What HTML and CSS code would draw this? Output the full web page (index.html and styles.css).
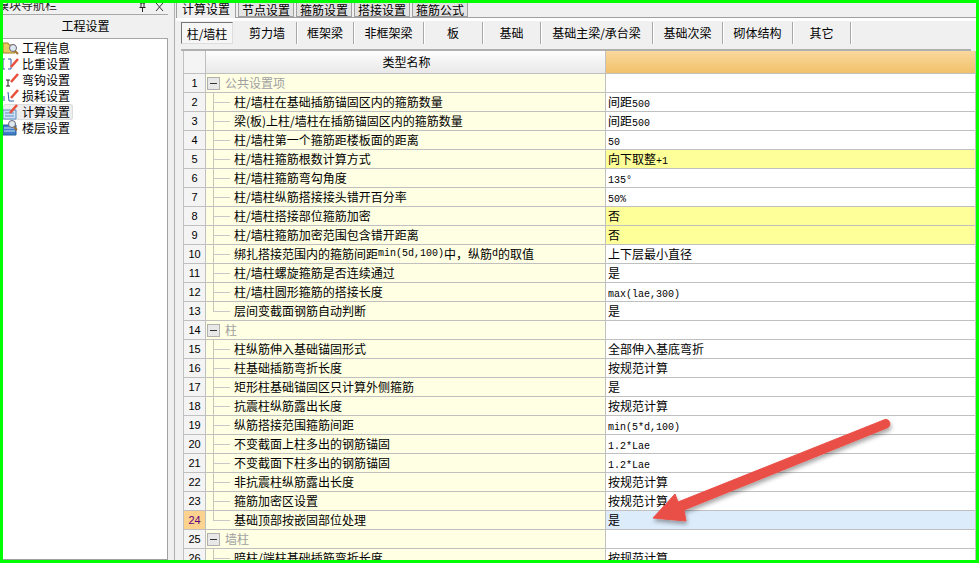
FILE: index.html
```html
<!DOCTYPE html>
<html lang="zh-CN">
<head>
    <meta charset="UTF-8">
    <title>工程设置</title>
    <link rel="stylesheet" href="styles.css">
</head>
<body>
    <div class="app">
        <!-- Left navigation panel -->
        <div class="sidebar">
            <div class="nav-title">
                <span class="nav-title-text">模块导航栏</span>
                <svg class="nav-pin" width="12" height="9" viewBox="0 0 12 9"><path d="M3 0h5M4 0v4M7 0v4M2.500 4.500h6M5.500 5v4" stroke="#222" fill="none"/></svg>
                <svg class="nav-close" width="10" height="9" viewBox="0 0 10 9"><path d="M1 0l7 8M8 0l-7 8" stroke="#333" fill="none"/></svg>
            </div>
            <div class="nav-head">工程设置</div>
            <ul class="nav-list">
                <li class="nav-item">
                    <svg class="nav-icon" width="16" height="16" viewBox="0 0 16 16"><path d="M0 3h5l1 2h6v8H0z" fill="#e8c860" stroke="#a08020"/><circle cx="10" cy="8" r="3.500" fill="#dfe9f2" stroke="#667"/><path d="M12 11l3 3" stroke="#a07030" stroke-width="2"/></svg>
                    工程信息
                </li>
                <li class="nav-item">
                    <svg class="nav-icon" width="16" height="16" viewBox="0 0 16 16"><path d="M2 3H0v10h2M5 3h3v10H5" stroke="#2f5fa0" fill="none"/><path d="M8 11l7-8" stroke="#e8503c" stroke-width="2.500"/></svg>
                    比重设置
                </li>
                <li class="nav-item">
                    <svg class="nav-icon" width="16" height="16" viewBox="0 0 16 16"><path d="M3 8h4M5 8v6M3 14h4" stroke="#222" fill="none"/><path d="M8 10l7-8" stroke="#e8503c" stroke-width="2.500"/></svg>
                    弯钩设置
                </li>
                <li class="nav-item">
                    <svg class="nav-icon" width="16" height="16" viewBox="0 0 16 16"><path d="M1 8v5M5 4l1 9h5" stroke="#2f5fa0" fill="none"/><path d="M8 10l7-8" stroke="#e8503c" stroke-width="2.500"/></svg>
                    损耗设置
                </li>
                <li class="nav-item nav-item-on">
                    <svg class="nav-icon" width="16" height="16" viewBox="0 0 16 16"><path d="M0 6h13v9H0z" fill="#cfe2f5" stroke="#5b8cc0"/><path d="M2 9h9M2 12h9" stroke="#5b8cc0"/><path d="M7 9l7-8" stroke="#e8503c" stroke-width="2.500"/></svg>
                    计算设置
                </li>
                <li class="nav-item">
                    <svg class="nav-icon" width="16" height="16" viewBox="0 0 16 16"><path d="M0 5h13v10H0z" fill="#3f7fc8" stroke="#2a5c98"/><path d="M1 8h11M1 11h11" stroke="#cfe2f5"/><circle cx="9" cy="4" r="3.500" fill="#dfe9f2" stroke="#667"/><path d="M11 7l3 3" stroke="#a07030" stroke-width="2"/></svg>
                    楼层设置
                </li>
            </ul>
        </div>

        <!-- Settings panel -->
        <div class="main">
            <div class="tabs">
                <div class="tab tab-on">计算设置</div>
                <div class="tab">节点设置</div>
                <div class="tab">箍筋设置</div>
                <div class="tab">搭接设置</div>
                <div class="tab">箍筋公式</div>
            </div>
            <div class="subtabs">
                <div class="subtab sub-52 subtab-on">柱/墙柱</div>
                <div class="subtab sub-59">剪力墙</div>
                <div class="subtab sub-57">框架梁</div>
                <div class="subtab sub-70">非框架梁</div>
                <div class="subtab sub-59">板</div>
                <div class="subtab sub-58">基础</div>
                <div class="subtab sub-112">基础主梁/承台梁</div>
                <div class="subtab sub-70">基础次梁</div>
                <div class="subtab sub-70">砌体结构</div>
                <div class="subtab sub-58">其它</div>
            </div>

            <table class="grid">
                <colgroup>
                    <col class="col-no">
                    <col class="col-name">
                    <col>
                </colgroup>
                <thead>
                    <tr>
                        <th class="no"></th>
                        <th>类型名称</th>
                        <th class="head-value"></th>
                    </tr>
                </thead>
                <tbody>
                    <tr><td class="no">1</td><td class="name"><div class="cell"><span class="fold"></span><span class="group">公共设置项</span></div></td><td></td></tr>
                    <tr><td class="no">2</td><td class="name"><div class="cell"><span class="branch"></span>柱/墙柱在基础插筋锚固区内的箍筋数量</div></td><td>间距<span class="lat">500</span></td></tr>
                    <tr><td class="no">3</td><td class="name"><div class="cell"><span class="branch"></span>梁(板)上柱/墙柱在插筋锚固区内的箍筋数量</div></td><td>间距<span class="lat">500</span></td></tr>
                    <tr><td class="no">4</td><td class="name"><div class="cell"><span class="branch"></span>柱/墙柱第一个箍筋距楼板面的距离</div></td><td><span class="lat">50</span></td></tr>
                    <tr><td class="no">5</td><td class="name"><div class="cell"><span class="branch"></span>柱/墙柱箍筋根数计算方式</div></td><td class="changed">向下取整<span class="lat">+1</span></td></tr>
                    <tr><td class="no">6</td><td class="name"><div class="cell"><span class="branch"></span>柱/墙柱箍筋弯勾角度</div></td><td><span class="lat">135°</span></td></tr>
                    <tr><td class="no">7</td><td class="name"><div class="cell"><span class="branch"></span>柱/墙柱纵筋搭接接头错开百分率</div></td><td><span class="lat">50%</span></td></tr>
                    <tr><td class="no">8</td><td class="name"><div class="cell"><span class="branch"></span>柱/墙柱搭接部位箍筋加密</div></td><td class="changed">否</td></tr>
                    <tr><td class="no">9</td><td class="name"><div class="cell"><span class="branch"></span>柱/墙柱箍筋加密范围包含错开距离</div></td><td class="changed">否</td></tr>
                    <tr><td class="no">10</td><td class="name"><div class="cell"><span class="branch"></span>绑扎搭接范围内的箍筋间距<span class="lat">min(5d,100)</span>中，纵筋<span class="lat">d</span>的取值</div></td><td>上下层最小直径</td></tr>
                    <tr><td class="no">11</td><td class="name"><div class="cell"><span class="branch"></span>柱/墙柱螺旋箍筋是否连续通过</div></td><td>是</td></tr>
                    <tr><td class="no">12</td><td class="name"><div class="cell"><span class="branch"></span>柱/墙柱圆形箍筋的搭接长度</div></td><td><span class="lat">max(lae,300)</span></td></tr>
                    <tr><td class="no">13</td><td class="name"><div class="cell"><span class="branch branch-last"></span>层间变截面钢筋自动判断</div></td><td>是</td></tr>
                    <tr><td class="no">14</td><td class="name"><div class="cell"><span class="fold"></span><span class="group">柱</span></div></td><td></td></tr>
                    <tr><td class="no">15</td><td class="name"><div class="cell"><span class="branch"></span>柱纵筋伸入基础锚固形式</div></td><td>全部伸入基底弯折</td></tr>
                    <tr><td class="no">16</td><td class="name"><div class="cell"><span class="branch"></span>柱基础插筋弯折长度</div></td><td>按规范计算</td></tr>
                    <tr><td class="no">17</td><td class="name"><div class="cell"><span class="branch"></span>矩形柱基础锚固区只计算外侧箍筋</div></td><td>是</td></tr>
                    <tr><td class="no">18</td><td class="name"><div class="cell"><span class="branch"></span>抗震柱纵筋露出长度</div></td><td>按规范计算</td></tr>
                    <tr><td class="no">19</td><td class="name"><div class="cell"><span class="branch"></span>纵筋搭接范围箍筋间距</div></td><td><span class="lat">min(5*d,100)</span></td></tr>
                    <tr><td class="no">20</td><td class="name"><div class="cell"><span class="branch"></span>不变截面上柱多出的钢筋锚固</div></td><td><span class="lat">1.2*Lae</span></td></tr>
                    <tr><td class="no">21</td><td class="name"><div class="cell"><span class="branch"></span>不变截面下柱多出的钢筋锚固</div></td><td><span class="lat">1.2*Lae</span></td></tr>
                    <tr><td class="no">22</td><td class="name"><div class="cell"><span class="branch"></span>非抗震柱纵筋露出长度</div></td><td>按规范计算</td></tr>
                    <tr><td class="no">23</td><td class="name"><div class="cell"><span class="branch"></span>箍筋加密区设置</div></td><td>按规范计算</td></tr>
                    <tr class="row-on"><td class="no">24</td><td class="name"><div class="cell"><span class="branch branch-last"></span>基础顶部按嵌固部位处理</div></td><td>是</td></tr>
                    <tr><td class="no">25</td><td class="name"><div class="cell"><span class="fold"></span><span class="group">墙柱</span></div></td><td></td></tr>
                    <tr><td class="no">26</td><td class="name"><div class="cell"><span class="branch"></span>暗柱/端柱基础插筋弯折长度</div></td><td>按规范计算</td></tr>
                </tbody>
            </table>
        </div>
    </div>

    <!-- Red annotation arrow drawn over the grid -->
    <svg class="arrow" width="979" height="563" viewBox="0 0 979 563">
        <defs>
            <filter id="arrowShadow" x="-10%" y="-10%" width="125%" height="130%">
                <feDropShadow dx="1" dy="3" stdDeviation="2" flood-color="#000" flood-opacity="0.35"/>
            </filter>
        </defs>
        <path filter="url(#arrowShadow)" fill="#ea4f47" stroke="#ea4f47" stroke-width="1" stroke-linejoin="round" d="M885 419.500C889 418.500 892 424 888 427.500L684 510L686 521L653 518L675 494L678 502Z"/>
    </svg>
</body>
</html>
```

FILE: styles.css
```css
/* Page frame: the green outline around the whole capture */
html, body {
    margin: 0;
    height: 100%;
}
body {
    box-sizing: border-box;
    height: 100vh;
    border: 3px solid #00ff00;
    overflow: hidden;
    font-family: "Noto Sans CJK SC", "Liberation Sans", sans-serif;
    font-size: 12px;
    color: #000;
    background-color: #f0f0f0;
}
.app {
    display: flex;
    height: 100%;
}
/* Left navigation */
.sidebar {
    width: 165px;
    flex-shrink: 0;
    display: flex;
    flex-direction: column;
}
.nav-title {
    height: 9px;
    display: flex;
    align-items: flex-end;
    overflow: hidden;
    padding-right: 3px;
    color: #222;
}
.nav-title-text {
    margin-left: -6px;
    line-height: 14px;
    margin-right: auto;
    flex-shrink: 0;
}
.nav-pin {
    margin-right: 6px;
}
.nav-head {
    height: 23px;
    line-height: 22px;
    margin-top: 2px;
    text-align: center;
    border-top: 1px solid #a8a8a8;
    border-bottom: 1px solid #a8a8a8;
    background-color: #f0f0f0;
}
.nav-list {
    flex: 1;
    list-style: none;
    margin: 0;
    padding: 1px 0 0;
    background-color: #fff;
    border-right: 1px solid #a0a0a0;
    border-bottom: 1px solid #a0a0a0;
}
.nav-item {
    height: 16px;
    line-height: 16px;
    display: flex;
    align-items: center;
    gap: 3px;
    margin-right: 94px;
    white-space: nowrap;
}
.nav-item-on {
    background-color: #eeeeee;
    border-radius: 3px;
    box-shadow: inset 0 0 0 1px #dcdcdc;
}
.nav-icon {
    flex-shrink: 0;
}
/* Main panel */
.main {
    flex: 1;
    min-width: 0;
    margin-left: 6px;
    padding-left: 1px;
    border-left: 1px solid #b0b0b0;
}
.tabs {
    height: 14px;
    display: flex;
    align-items: flex-end;
    gap: 2px;
    border-bottom: 1px solid #a0a0a0;
    box-shadow: 0 1px 0 #fff, 0 3px 0 #fff;
}
.tab {
    width: 56px;
    height: 14px;
    line-height: 14px;
    text-align: center;
    background-color: #e4e4e4;
    border: 1px solid #a0a0a0;
    border-top: none;
    box-sizing: border-box;
    overflow: hidden;
}
.tab-on {
    width: 60px;
    background-color: #f0f0f0;
    border-bottom: none;
    height: 15px;
    line-height: 11px;
    margin-bottom: -1px;
}
.subtabs {
    display: flex;
    height: 22px;
    margin-top: 4px;
    margin-left: 5px;
    padding-bottom: 5px;
    border-bottom: 2px solid #b0b0b0;
    width: 790px;
    box-sizing: content-box;
}
.subtab {
    line-height: 21px;
    text-align: center;
    border-right: 1px solid #a8a8a8;
    box-shadow: 1px 0 0 #fff;
    box-sizing: border-box;
    white-space: nowrap;
}
.subtab-on {
    background-color: #f6f6f6;
    border: 1px solid #777;
    border-right-color: #ddd;
    border-bottom-color: #ddd;
    box-shadow: none;
    margin-right: 5px;
}
.sub-52 { width: 52px; }
.sub-57 { width: 57px; }
.sub-58 { width: 58px; }
.sub-59 { width: 59px; }
.sub-70 { width: 70px; }
.sub-112 { width: 112px; }

/* Settings grid */
.grid {
    border-collapse: collapse;
    table-layout: fixed;
    width: 793px;
    margin-left: 7px;
    margin-top: 0;
}
.col-no { width: 22px; }
.col-name { width: 400px; }
.grid th, .grid td {
    height: 18px;
    padding: 0 0 0 2px;
    border: 1px solid #c0c0c0;
    border-top: none;
    font-weight: normal;
    line-height: 18px;
    white-space: nowrap;
    overflow: hidden;
    background-color: #fff;
    box-sizing: content-box;
}
.grid th {
    height: 22px;
    text-align: center;
    background: linear-gradient(#fdfdfd, #e8e8e8);
}
.grid th.head-value {
    background: linear-gradient(#f8d89c, #f2c06a);
}
.grid td.no, .grid th.no {
    padding: 0;
    text-align: center;
    font-family: "Liberation Sans", sans-serif;
    font-size: 11px;
    background: #f4f4f4;
}
.grid td.name {
    background-color: #ffffe3;
    padding: 0;
}
.grid td.changed {
    background-color: #ffff99;
}
.row-on td {
    background-color: #ddecfb;
}
.grid .row-on td.no {
    background: #fbd28e;
    color: #600080;
}
.grid .row-on td.name {
    background-color: #ffffe3;
}
.cell {
    display: flex;
    align-items: center;
    height: 18px;
}
/* Tree decorations in the name column */
.branch {
    width: 17px;
    height: 19px;
    margin-left: 7px;
    margin-right: 4px;
    flex-shrink: 0;
    background:
        linear-gradient(#c8c8b8, #c8c8b8) 0 0 / 1px 100% no-repeat,
        linear-gradient(#c8c8c8, #c8c8c8) 0 9px / 17px 1px no-repeat;
}
.branch-last {
    background:
        linear-gradient(#c8c8b8, #c8c8b8) 0 0 / 1px 10px no-repeat,
        linear-gradient(#c8c8c8, #c8c8c8) 0 9px / 17px 1px no-repeat;
}
.fold {
    width: 11px;
    height: 11px;
    margin-left: 1px;
    margin-right: 5px;
    flex-shrink: 0;
    border: 1px solid #b0b0b0;
    box-sizing: content-box;
    background: linear-gradient(#333, #333) center / 7px 1px no-repeat, #e8e8e8;
}
.group {
    color: #a0a0a0;
}
.lat {
    font-family: "Liberation Mono", monospace;
    font-size: 10px;
    line-height: 1;
}
/* Annotation overlay */
.arrow {
    position: absolute;
    left: 0;
    top: 0;
    pointer-events: none;
}
```
